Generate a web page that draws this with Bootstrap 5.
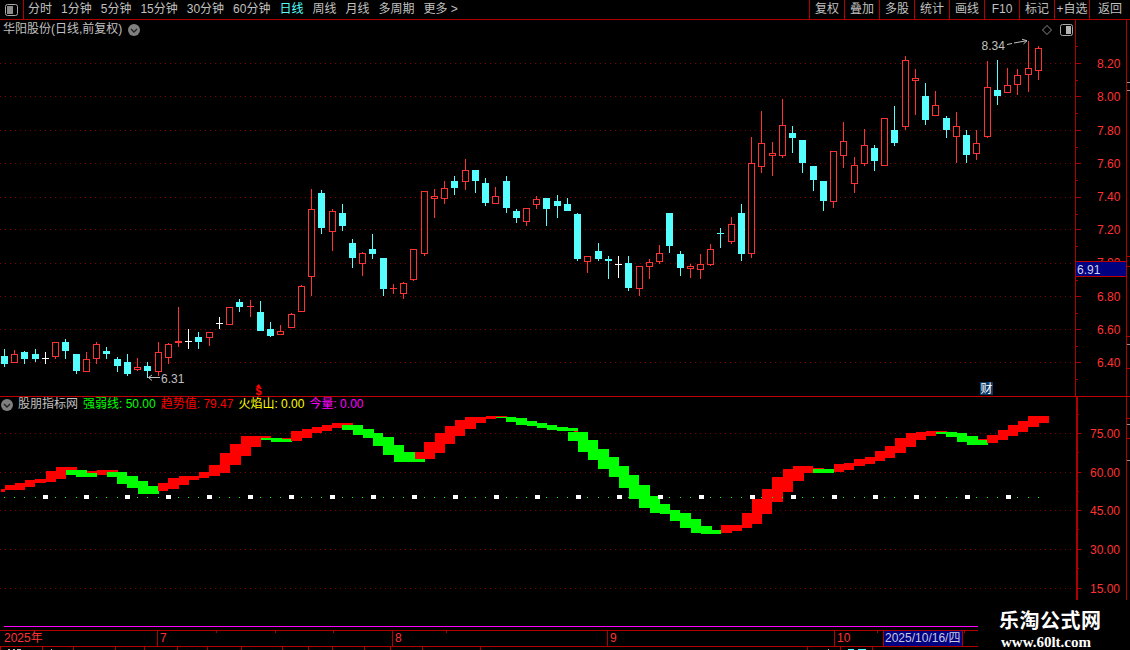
<!DOCTYPE html>
<html lang="zh">
<head>
<meta charset="utf-8">
<title>华阳股份</title>
<link href="https://cdn.jsdelivr.net/npm/bootstrap@5.3.0/dist/css/bootstrap.min.css" rel="stylesheet">
<style>
html,body{height:650px;overflow:hidden;background:#000}
body{font:12px/1 "Liberation Sans","Noto Sans CJK SC",sans-serif;color:#c0c0c0}
.stage{width:1130px;height:650px}
.tbar{height:20px;border-bottom:1px solid #b00000;line-height:19px;white-space:nowrap}
.tb-icon{width:24px;height:19px;border-right:1px solid #b00000}
.tb-menu{gap:9px;padding-left:4px}
.tb-act{width:35px;height:19px;border-left:1px solid #b00000;text-align:center}
.tb-act-end{width:41px}
.tb-on{color:#55ffff}
.pane-main{height:377px}
.pane-sub{height:203px}
.pane-main svg,.pane-sub svg{display:block}
.stitle{left:3px;top:3px;gap:6px;line-height:13px}
.ititle{left:1px;top:1px;line-height:13px;gap:5px}
.i-g{color:#00ff00}.i-r{color:#ff0000}.i-y{color:#ffff00}.i-m{color:#ff00ff}
svg text{font-family:"Liberation Sans","Noto Sans CJK SC",sans-serif;font-size:12px}
.ax{fill:#ff3232}
.dim{fill:#c0c0c0}
.foot{height:50px}
.foot-l{width:978px}
.mline{height:1px;background:#ff00ff;margin:26px 0 3px 4px}
.trow{height:17px;border-top:1px solid #b00000;border-bottom:1px solid #b00000;color:#ff3232;line-height:15px}
.tc{border-right:1px solid #b00000;padding-left:2px;flex:none}
.tc1{width:158px;padding-left:4px}.tc2{width:235px}.tc3{width:215px}.tc4{width:227px}.tc5{width:49px}
.tc6{width:79px;background:#000080;color:#c8c8e0;padding-left:1px;white-space:nowrap}
.tticks{left:0;top:0}
.brand{width:152px;color:#fff;padding-left:21px;padding-top:9px}
.brand-cn{font:700 20px/22px "Noto Sans CJK SC",sans-serif;letter-spacing:.5px;white-space:nowrap}
.brand-en{font:700 15px/17px "Liberation Serif",serif;margin-top:3px;padding-left:2px;white-space:nowrap}
.stub{display:block}
</style>
</head>
<body class="m-0">
<div class="stage d-flex flex-column">
  <nav class="tbar d-flex">
    <div class="tb-icon d-flex align-items-center justify-content-center flex-none">
      <svg width="13" height="12" viewBox="0 0 13 12"><rect x=".5" y=".5" width="12" height="11" rx="2" fill="#000" stroke="#a8a8a8"/><rect x="2" y="2" width="6" height="8" fill="#8c8c8c"/></svg>
    </div>
    <div class="tb-menu d-flex">
      <span>分时</span><span>1分钟</span><span>5分钟</span><span>15分钟</span><span>30分钟</span><span>60分钟</span><span class="tb-on">日线</span><span>周线</span><span>月线</span><span>多周期</span><span>更多 &gt;</span>
    </div>
    <div class="d-flex ms-auto">
      <span class="tb-act">复权</span><span class="tb-act">叠加</span><span class="tb-act">多股</span><span class="tb-act">统计</span><span class="tb-act">画线</span><span class="tb-act">F10</span><span class="tb-act">标记</span><span class="tb-act">+自选</span><span class="tb-act tb-act-end">返回</span>
    </div>
  </nav>

  <section class="pane-main position-relative">
    <svg id="mainSvg" width="1130" height="377" viewBox="0 20 1130 377">
      <g id="mainGrid"></g>
      <g id="candles"></g>
      <g id="mainAxis"></g>
      <g class="ax">
        <text x="1097" y="68">8.20</text><text x="1097" y="101">8.00</text><text x="1097" y="134.500">7.80</text><text x="1097" y="168">7.60</text><text x="1097" y="201">7.40</text><text x="1097" y="234">7.20</text><text x="1097" y="267">7.00</text><text x="1097" y="300.500">6.80</text><text x="1097" y="333.500">6.60</text><text x="1097" y="366.500">6.40</text>
      </g>
      <rect x="1076" y="261" width="50" height="16" fill="#000080"/>
      <path d="M1075.500 261.500H1126.500M1075.500 276.500H1126.500" stroke="#c00000" fill="none" shape-rendering="crispEdges"/>
      <text x="1077" y="273.500" fill="#d0d0e8">6.91</text>
      <text x="981.500" y="50" class="dim">8.34</text>
      <path d="M1007 44.500L1012 43.500M1014 43L1027 40.700M1022 39.300L1027 40.700L1023.500 44" fill="none" stroke="#c0c0c0"/>
      <text x="161" y="383" class="dim">6.31</text>
      <path d="M148.500 377.500H160M152 375L148.500 377.500L152 380.500" fill="none" stroke="#c0c0c0"/>
      <path d="M1047 25.500L1051.500 30L1047 34.500L1042.500 30Z" fill="none" stroke="#8c8c8c"/>
      <rect x="1060.500" y="24.500" width="12" height="11" rx="2" fill="#000" stroke="#a8a8a8"/><rect x="1066" y="26" width="5" height="8" fill="#b4b4b4"/>
      <path d="M258.500 384L261 387H256Z" fill="#ff0000"/>
      <text x="258.500" y="395" text-anchor="middle" font-weight="700" fill="#ff0000" style="font-size:11px">$</text>
      <rect x="980" y="382" width="13" height="13" fill="#0c3a68"/>
      <text x="980.500" y="393" fill="#fff">财</text>
      <rect x="0" y="396" width="1130" height="1" fill="#c00000"/>
    </svg>
    <div class="stitle position-absolute d-flex align-items-center">
      <span>华阳股份(日线,前复权)</span>
      <svg width="12" height="12" viewBox="0 0 12 12"><circle cx="6" cy="6" r="6" fill="#808080"/><path d="M3 5L6 8L9 5" fill="none" stroke="#222" stroke-width="1.400"/></svg>
    </div>
  </section>

  <section class="pane-sub position-relative">
    <svg id="subSvg" width="1130" height="203" viewBox="0 397 1130 203">
      <g id="subGrid"></g>
      <g id="band" shape-rendering="crispEdges"></g>
      <g id="dots" shape-rendering="crispEdges"></g>
      <g id="subAxis"></g>
      <g class="ax">
        <text x="1090" y="437.500">75.00</text><text x="1090" y="476.500">60.00</text><text x="1090" y="515">45.00</text><text x="1090" y="553.500">30.00</text><text x="1090" y="592.500">15.00</text>
      </g>
    </svg>
    <div class="ititle position-absolute d-flex align-items-center">
      <svg width="12" height="12" viewBox="0 0 12 12"><circle cx="6" cy="6" r="6" fill="#808080"/><path d="M3 5L6 8L9 5" fill="none" stroke="#222" stroke-width="1.400"/></svg>
      <span>股朋指标网</span>
      <span class="i-g">强弱线: 50.00</span>
      <span class="i-r">趋势值: 79.47</span>
      <span class="i-y">火焰山: 0.00</span>
      <span class="i-m">今量: 0.00</span>
    </div>
  </section>

  <footer class="foot d-flex">
    <div class="foot-l d-flex flex-column">
      <div class="mline"></div>
      <div class="trow d-flex position-relative">
        <span class="tc tc1">2025年</span><span class="tc tc2">7</span><span class="tc tc3">8</span><span class="tc tc4">9</span><span class="tc tc5">10</span><span class="tc tc6">2025/10/16/四</span>
        <svg class="tticks position-absolute" width="978" height="3" shape-rendering="crispEdges"><path d="M216 0v2M275 0v2M333 0v2M446 0v2M877 0v2M964 0v2" stroke="#b00000" fill="none"/></svg>
      </div>
      <svg class="stub" width="978" height="4" shape-rendering="crispEdges">
        <path d="M0 0v4M42 0v4M73 0v4M115 0v4M144 0v4M177 0v4M207 0v4M241 0v4M282 0v4M308 0v4M332 0v4M364 0v4M390 0v4M422 0v4M480 0v4M807 0v4M840 0v4M872 0v4" stroke="#b00000" fill="none"/>
        <path d="M8 2h2M13 2h2M17 2h4M51 2h1M828 2h1" stroke="#c0c0c0" fill="none"/>
        <path d="M848 2h6M858 2h8" stroke="#55ffff" fill="none"/>
      </svg>
    </div>
    <div class="brand">
      <div class="brand-cn">乐淘公式网</div>
      <div class="brand-en">www.60lt.com</div>
    </div>
  </footer>
</div>

<script src="https://cdn.jsdelivr.net/npm/bootstrap@5.3.0/dist/js/bootstrap.bundle.min.js"></script>
<script>
var NS='http://www.w3.org/2000/svg';
function el(p,n,a){var e=document.createElementNS(NS,n);for(var k in a)e.setAttribute(k,a[k]);p.appendChild(e);return e}
function R(p,x,y,w,h,f){return el(p,'rect',{x:x,y:y,width:w,height:h,fill:f,'shape-rendering':'crispEdges'})}
function dotted(p,y){el(p,'line',{x1:0,x2:1075,y1:y+.5,y2:y+.5,stroke:'#840000','stroke-dasharray':'1 4','shape-rendering':'crispEdges'})}
function X(i){return Math.floor(4.5+10.235*i)}

/* candles: kind, wick top, body top, body bottom, wick bottom */
var C=[
['c',349,356,364,367],['r',350,354,363,363],['c',351,352,359,364],['c',349,354,359,362],['w',352,358,358,364],
['r',342,342,357,359],['c',339,342,351,359],['c',354,354,371,374],['r',352,359,372,372],['r',342,344,359,364],
['c',347,351,354,359],['c',357,359,366,372],['c',354,362,374,376],['r',358,367,370,371],['c',362,366,371,378],
['r',342,352,372,376],['r',343,344,358,364],['r',307,341,343,347],['w',329,341,341,349],['c',332,337,342,349],
['r',332,332,338,346],['w',317,323,323,329],['r',307,307,325,325],['c',299,302,307,312],['r',300,306,307,317],
['c',301,312,331,331],['c',322,329,336,337],['r',325,331,335,335],['r',313,314,328,328],['r',285,286,312,312],
['r',189,209,277,296],['c',190,193,228,234],['r',209,211,232,251],['c',204,213,226,231],['c',239,243,258,268],
['r',252,253,264,276],['c',234,249,254,259],['c',258,258,289,296],['r',284,288,289,294],['r',282,283,294,299],
['r',249,249,280,281],['r',191,191,254,256],['r',189,196,199,218],['r',181,188,199,204],['c',176,181,188,195],
['r',159,170,182,190],['c',170,170,181,193],['c',178,183,203,206],['r',187,196,204,204],['c',176,181,208,213],
['c',209,211,218,223],['r',208,208,222,226],['r',196,199,205,209],['c',198,198,209,226],['c',195,201,206,218],
['c',198,204,211,211],['c',213,214,259,261],['r',256,256,262,273],['c',243,251,259,261],['c',256,259,261,279],
['w',256,264,264,278],['c',256,263,288,291],['r',266,266,289,296],['r',259,262,267,279],['r',245,253,262,264],
['c',213,213,246,253],['c',251,254,268,276],['r',264,266,269,278],['r',254,264,270,279],['r',244,249,265,266],
['C',228,233,233,248],['r',217,224,242,244],['c',204,213,254,261],['r',137,163,254,258],['r',111,143,167,173],
['r',142,153,156,176],['r',99,125,156,158],['c',126,133,138,153],['c',140,140,163,173],['c',166,166,180,191],
['c',181,181,201,211],['r',151,151,202,208],['r',122,141,156,168],['r',157,165,184,193],['r',129,145,164,166],
['c',145,148,161,171],['r',118,118,166,166],['c',106,130,143,146],['r',56,60,127,130],['r',69,78,81,115],
['c',83,96,120,125],['r',91,105,116,116],['c',116,118,130,138],['r',112,126,137,163],['c',130,135,155,163],
['r',130,143,154,160],['r',61,87,137,138],['c',60,90,96,105],['r',68,85,93,93],['r',69,75,85,95],
['r',41,68,75,92],['r',46,48,71,80]];
var cg=document.getElementById('candles');
C.forEach(function(c,i){
  var x=X(i),col={r:'#ff3232',c:'#55ffff',C:'#55ffff',w:'#ffffff'}[c[0]];
  R(cg,x,c[1],1,c[4]-c[1],col);
  if(c[2]===c[3]){R(cg,x-3,c[2],7,1,col);return}
  if(c[0]==='c'){R(cg,x-3,c[2],7,c[3]-c[2],col);return}
  if(c[3]-c[2]<=2){R(cg,x-3,c[2],7,c[3]-c[2],col);return}
  el(cg,'rect',{x:x-2.5,y:c[2]+.5,width:6,height:c[3]-c[2]-1,fill:'#000',stroke:col,'shape-rendering':'crispEdges'});
});

/* main grid and axis */
var mg=document.getElementById('mainGrid'),ma=document.getElementById('mainAxis');
[63,96,130,163,197,229,263,296,329,362].forEach(function(y,i,a){
  dotted(mg,y);R(ma,1075,y,6,1,'#b00000');
  if(i<a.length)R(ma,1075,y+17,3,1,'#b00000');
});
R(ma,1075,46,3,1,'#b00000');
R(ma,1075,20,1,376,'#b00000');R(ma,1126,20,1,376,'#b00000');
[[82,'#909090'],[90,'#909090'],[256,'#b00000'],[266,'#b00000'],[336,'#b00000'],[344,'#909090'],[368,'#b00000']].forEach(function(v){R(ma,1127,v[0],3,1,v[1])});

/* indicator band: visible stair rects, x1,x2,y1,y2 in 3x crop units */
function band(ox,oy,list){
  var g=document.getElementById('band');
  list.forEach(function(r){
    var x1=Math.round(ox+r[0]/3),x2=Math.round(ox+r[1]/3),y1=Math.round(oy+r[2]/3),y2=Math.round(oy+r[3]/3);
    R(g,x1,y1,x2-x1,Math.max(1,y2-y1),r[4]?'#00ff00':'#ff0000');
  });
}
band(0,400,[
[3,15,267,275],[15,45,255,270],[45,75,249,270],[75,105,240,261],[105,138,237,250],[138,168,213,246],[168,198,201,237],[198,230,201,210],
[198,228,210,225,1],[228,260,210,231,1],[261,291,213,219],[260,291,219,231,1],[291,321,210,225],[321,354,210,216],[321,351,216,231,1],
[351,381,216,252,1],[381,414,228,264,1],[414,444,243,282,1],[444,476,258,282,1],[474,504,249,273],[504,537,234,267],[537,567,228,255],
[567,597,228,240],[597,627,216,234],[627,660,195,228],[660,690,159,219],[690,723,132,195],[723,753,108,168],[753,783,108,141],
[783,813,108,114],[783,813,114,120,1],[813,846,114,126,1],[846,873,114,117],[846,876,117,126,1],[873,906,93,123],[906,936,87,114],
[936,966,81,99],[966,996,75,93],[996,1026,69,84],[1026,1059,69,75],[1026,1059,75,90,1],[1059,1089,75,105,1],[1089,1110,87,114,1]]);
band(370,405,[
[0,12,72,99,1],[9,39,84,123,1],[39,72,96,150,1],[72,102,120,171,1],[102,135,141,171,1],[135,165,159,171,1],[135,162,141,162],
[162,195,111,162],[195,225,84,144],[225,255,63,117],[255,285,45,93],[285,318,36,72],[318,348,36,54],[348,378,33,42],[378,411,33,36],
[378,408,36,39,1],[408,438,36,51,1],[438,471,39,60,1],[471,501,48,63,1],[501,531,54,69,1],[531,561,60,75,1],[561,594,66,78,1],
[594,624,69,78,1],[612,624,78,81],[594,624,81,108,1],[624,654,81,141,1],[654,684,105,165,1],[684,717,132,192,1],[717,747,156,216,1],
[747,777,183,249,1],[777,807,210,282,1],[807,840,240,309,1],[840,870,273,324,1],[870,900,297,327,1],[900,930,315,348,1],
[930,963,324,369,1],[963,993,342,384,1],[993,1026,363,387,1],[1026,1053,375,387,1]]);
band(720,405,[
[3,36,360,384],[36,66,360,378],[66,96,324,370],[96,126,282,357],[126,156,252,327],[156,189,216,291],[189,219,192,261],[219,252,183,228],
[252,279,183,204],[279,312,189,192],[279,342,192,204,1],[342,372,177,201],[372,402,174,195],[402,435,162,183],[435,465,156,177],
[465,495,138,168],[495,525,123,159],[525,558,99,144],[558,588,84,126],[588,618,81,105],[618,648,78,93],[648,681,78,81],[648,678,81,87,1],
[678,711,81,96,1],[711,741,84,111,1],[741,774,93,120,1],[774,804,102,105],[774,804,105,120,1],[801,834,90,114],[834,864,75,105],
[864,894,60,93],[894,924,48,81],[924,957,33,66],[957,987,33,54]]);

/* level markers */
var dg=document.getElementById('dots');
for(var i=0;i<102;i++){R(dg,X(i),497,1,1,'#00ff00')}
[43,84,125,166,207,248,289,330,371,412,453,494,535,576,617,658,699,750,791,832,873,914,965,1006].forEach(function(x){R(dg,x,495,5,4,'#ffffff')});

/* sub grid and axis */
var sg=document.getElementById('subGrid'),sa=document.getElementById('subAxis');
[433,472,510,549,588].forEach(function(y){dotted(sg,y);R(sa,1076,y,5,1,'#b00000');R(sa,1076,y+19,3,1,'#b00000')});
R(sa,1076,414,3,1,'#b00000');
R(sa,1076,397,2,203,'#b00000');R(sa,1126,397,1,203,'#b00000');
[[418,'#b00000'],[424,'#909090'],[438,'#b00000'],[460,'#909090']].forEach(function(v){R(sa,1127,v[0],3,1,v[1])});
</script>
</body>
</html>
